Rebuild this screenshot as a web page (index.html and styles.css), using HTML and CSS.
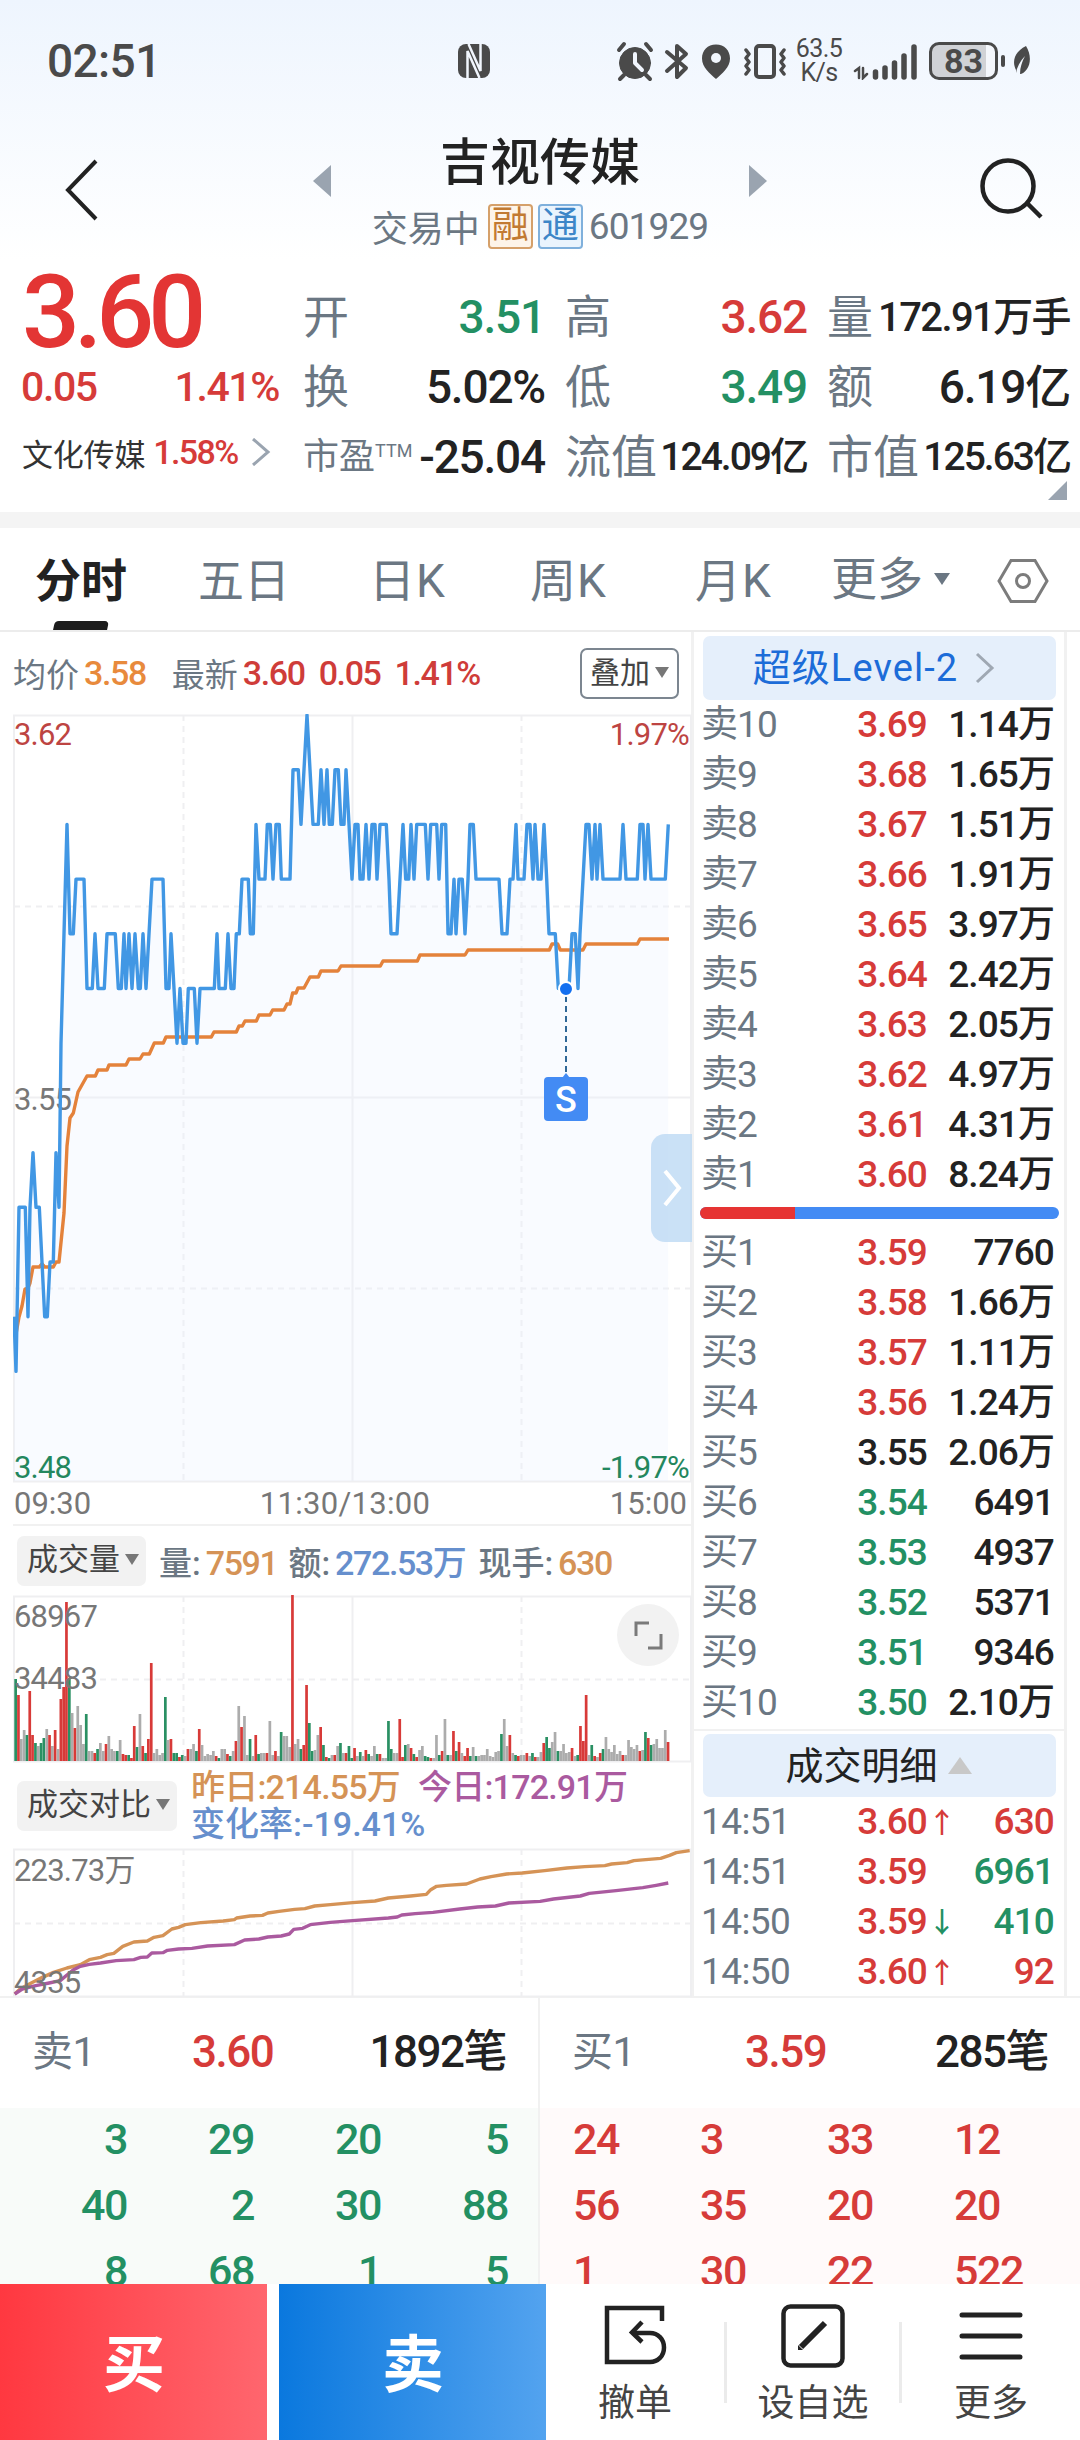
FILE: index.html
```html
<!DOCTYPE html>
<html lang="zh-CN">
<head>
  <meta charset="UTF-8" />
  <meta name="viewport" content="width=device-width, initial-scale=1.0"/>
  <title>吉视传媒 601929</title>
  <link rel="stylesheet" href="styles.css">
</head>
<body>
  <header class="top">
    <div class="status">
      <span class="clock">02:51</span>
      <svg class="nfc" width="34" height="36" viewBox="0 0 34 36">
        <rect x="1" y="1" width="32" height="34" rx="8" fill="#4a4a4a"/>
        <path d="M10.500 35V8l12 27M23.500 1v27L11.500 1" fill="none" stroke="#f1f6fd" stroke-width="2.500"/>
      </svg>
      <svg class="status-icons" width="180" height="44" viewBox="0 0 180 44" fill="#4a4a4a" stroke="#4a4a4a" stroke-linecap="round" stroke-linejoin="round">
        <circle cx="20" cy="24" r="15.5"/>
        <path d="M4 11l5-6M36 11l-5-6M9 36l-4 4M31 36l4 4" stroke-width="4" fill="none"/>
        <path d="M20 15v9l7 7" stroke="#f1f6fd" stroke-width="4" fill="none"/>
        <path d="M52 13l19 16-9 9V7l9 8-19 17" stroke-width="4" fill="none"/>
        <path d="M101 5.500c-8.500 0-14 6-14 14 0 9 8 15 14 20.500 6-5.500 14-11.500 14-20.500 0-8-5.500-14-14-14z" stroke="none"/>
        <circle cx="101" cy="19" r="5" fill="#f1f6fd" stroke="none"/>
        <rect x="141" y="7" width="18" height="31" rx="3" fill="none" stroke-width="4"/>
        <path d="M131 11l3 4-3 4 3 4-3 4 3 4-3 4M169 11l-3 4 3 4-3 4 3 4-3 4 3 4" fill="none" stroke-width="3.500"/>
      </svg>
      <div class="net"><span>63.5</span><span>K/s</span></div>
      <svg class="signal" width="66" height="38" viewBox="0 0 66 38" stroke="#4a4a4a" stroke-width="5.500" stroke-linecap="round" fill="none">
        <path d="M23.500 30v5M33 26v9M42.500 21v14M52 14v21M62 5v30"/>
        <path d="M3 29l4-3v10M11 26v10l4-4" stroke-width="2.500"/>
      </svg>
      <div class="battery"><span>83</span></div>
      <i class="battery-tip"></i>
      <svg class="leaf" width="20" height="32" viewBox="0 0 20 32">
        <path d="M4 25C-1 15 4 6 14 1c5 8 5 17 1 23-2 3-5 5-7 5 0-7 2-12 5-18C8 16 5 22 4 28z" fill="#4a4a4a"/>
      </svg>
    </div>

    <div class="nav">
      <svg class="back" width="34" height="62" viewBox="0 0 34 62"><path d="M31 2L3 31l28 29" fill="none" stroke="#222" stroke-width="4"/></svg>
      <i class="tri tri-left"></i>
      <div class="stock">
        <h1>吉视传媒</h1>
        <div class="stock-sub"><span>交易中</span><b class="tag tag-rong">融</b><b class="tag tag-tong">通</b><span class="code">601929</span></div>
      </div>
      <i class="tri tri-right"></i>
      <svg class="search" width="66" height="66" viewBox="0 0 66 66" fill="none" stroke="#222" stroke-width="4.500"><circle cx="29" cy="29" r="25.500"/><path d="M48 46l14 14"/></svg>
    </div>
  </header>

  <section class="quote">
    <div class="price-box">
      <div class="price">3.60</div>
      <div class="change"><span>0.05</span><span>1.41%</span></div>
      <div class="sector"><span>文化传媒</span><b>1.58%</b>
        <svg width="20" height="28" viewBox="0 0 20 28"><path d="M2 1l15 13L2 27" fill="none" stroke="#9aa4b0" stroke-width="3"/></svg>
      </div>
    </div>
    <div class="stats">
      <div class="stat"><span>开</span><b class="green">3.51</b></div>
      <div class="stat"><span>高</span><b class="red">3.62</b></div>
      <div class="stat"><span>量</span><b class="fit">172.91万手</b></div>
      <div class="stat"><span>换</span><b>5.02%</b></div>
      <div class="stat"><span>低</span><b class="green">3.49</b></div>
      <div class="stat"><span>额</span><b>6.19亿</b></div>
      <div class="stat"><span class="pe">市盈<sup>TTM</sup></span><b>-25.04</b></div>
      <div class="stat"><span>流值</span><b class="fit small">124.09亿</b></div>
      <div class="stat"><span>市值</span><b class="fit small">125.63亿</b></div>
    </div>
    <i class="expand-corner"></i>
  </section>

  <nav class="tabs">
    <span class="tab active">分时</span>
    <span class="tab">五日</span>
    <span class="tab">日K</span>
    <span class="tab">周K</span>
    <span class="tab">月K</span>
    <span class="tab more">更多<i class="caret"></i></span>
    <svg class="hex" width="52" height="46" viewBox="0 0 52 46" fill="none" stroke="#7c7c7c" stroke-width="3"><path d="M14 2.500h24L50 23 38 43.500H14L2 23z"/><circle cx="26" cy="23" r="6.500"/></svg>
  </nav>

  <main class="main">
    <div class="charts">
      <div class="chart-info">
        <span class="lbl">均价</span><b class="orange">3.58</b>
        <span class="lbl latest">最新</span><b>3.60</b><b>0.05</b><b>1.41%</b>
        <span class="overlay-btn">叠加<i class="caret"></i></span>
      </div>

      <div class="price-chart">
        <svg width="680" height="812" viewBox="13 714 680 812">
          <g class="grid">
            <path d="M14 715.500H691V1481.500H14zM14 1097.500H691M352.500 715V1481"/>
            <path class="dash" d="M14 906.500H691M14 1288.500H691M183.500 715V1481M521.500 715V1481"/>
          </g>
          <polygon id="priceArea" class="area"/>
          <text class="t red-t" x="14" y="745">3.62</text>
          <text class="t red-t end" x="689" y="745">1.97%</text>
          <text class="t" x="14" y="1110">3.55</text>
          <text class="t green-t" x="14" y="1478">3.48</text>
          <text class="t green-t end" x="689" y="1478">-1.97%</text>
          <text class="t time" x="14" y="1514">09:30</text>
          <text class="t time mid" x="345" y="1514">11:30/13:00</text>
          <text class="t time end" x="687" y="1514">15:00</text>
          <polyline class="avg-line" transform="scale(.33333 1)" points="42,1317 48,1334 57,1317 66,1306 75,1289 84,1288 90,1283 99,1267 118,1267 126,1264 134,1267 160,1267 168,1262 177,1262 192,1213 201,1146 210,1118 220,1113 234,1092 261,1076 286,1076 294,1070 321,1070 327,1065 378,1065 387,1059 420,1059 429,1054 448,1054 463,1043 490,1043 498,1037 634,1037 642,1032 709,1032 717,1026 727,1026 735,1021 769,1021 777,1015 810,1015 818,1010 852,1010 861,1004 870,1004 878,993 888,993 894,988 912,988 930,977 955,977 963,971 1014,971 1023,966 1141,966 1149,961 1252,961 1260,955 1395,955 1404,950 1648,950 1656,944 1673,944 1681,950 1749,950 1758,944 1912,944 1920,939 2007,939"/>
          <polyline id="priceLine" class="price-line"/>
          <path d="M566 996v76" stroke="#2f6796" stroke-width="2" stroke-dasharray="6 4"/>
          <circle cx="566" cy="989" r="7" fill="#1470f0" stroke="#fff" stroke-width="2"/>
          <path d="M562 1078l4-5 4 5z" fill="#438bf4"/>
          <rect x="544" y="1077" width="44" height="44" rx="4" fill="#438bf4"/>
          <text class="sell-mark" x="566" y="1112">S</text>
        </svg>
        <div class="drawer-handle"><svg width="22" height="40" viewBox="0 0 22 40"><path d="M4 3l14 17L4 37" fill="none" stroke="#fff" stroke-width="4"/></svg></div>
      </div>

      <div class="chart-info vol-info">
        <span class="pick">成交量<i class="caret"></i></span>
        <span class="pair">量:<b class="tan">7591</b></span>
        <span class="pair">额:<b class="blue">272.53万</b></span>
        <span class="pair now">现手:<b class="tan">630</b></span>
      </div>
      <div class="vol-chart">
        <svg width="680" height="168" viewBox="13 1596 680 168">
          <g class="grid">
            <path d="M14 1597.500H691V1762.500H14zM352.500 1597V1762"/>
            <path class="dash" d="M100 1680.500H691M183.500 1597V1762M521.500 1597V1762"/>
          </g>
          <g id="bars"></g>
          <text class="t" x="14" y="1628">68967</text>
          <text class="t" x="14" y="1690">34483</text>
          <circle cx="648" cy="1636" r="31" fill="#f2f2f2"/>
          <path d="M636 1637v-13h13M661 1635v14h-13" fill="none" stroke="#7a7a7a" stroke-width="3"/>
        </svg>
      </div>

      <div class="chart-info cmp-info">
        <span class="pick">成交对比<i class="caret"></i></span>
        <div class="cmp-text">
          <b class="tan">昨日:214.55万</b><b class="purple">今日:172.91万</b><br>
          <b class="blue rate">变化率:-19.41%</b>
        </div>
      </div>
      <svg class="cmp-chart" width="680" height="149" viewBox="13 1849 680 149">
        <g class="grid">
          <path d="M14 1850.500H691V1997.500H14zM352.500 1850V1998"/>
          <path class="dash" d="M14 1924.500H691M183.500 1850V1998M521.500 1850V1998"/>
        </g>
        <g transform="translate(0 1760) scale(.4464 .33333)">
          <polyline class="cmp-line" stroke="#d59356" points="33,705 45,690 70,672 95,655 120,640 150,627 180,617 200,602 225,595 240,587 255,583 275,562 300,549 330,546 345,535 365,530 385,510 400,505 415,497 450,491 500,486 525,482 530,477 560,471 588,469 600,462 625,457 660,451 683,449 705,441 740,437 790,431 840,426 870,417 920,411 955,406 965,392 978,382 1000,379 1045,375 1075,360 1100,353 1135,345 1170,342 1220,335 1270,327 1310,323 1355,320 1370,315 1405,311 1420,305 1480,298 1500,289 1515,281 1545,275"/>
          <polyline class="cmp-line" stroke="#aa5a9f" points="33,705 50,690 80,680 110,672 135,665 150,648 165,632 180,622 200,616 225,612 260,605 300,602 315,595 330,594 340,582 365,581 375,574 400,570 430,568 465,561 525,557 548,543 580,540 600,534 630,531 648,525 658,511 678,508 695,497 740,490 790,485 870,477 890,474 900,468 930,464 970,460 1030,450 1070,444 1110,441 1140,432 1210,427 1240,420 1300,411 1320,403 1380,395 1440,386 1470,379 1497,372"/>
        </g>
        <text class="t" x="14" y="1882">223.73万</text>
        <text class="t" x="14" y="1994">4335</text>
      </svg>
    </div>

    <aside class="book">
      <div class="level2">超级Level-2
        <svg width="20" height="32" viewBox="0 0 20 32"><path d="M2 2l15 14L2 30" fill="none" stroke="#9fa8b3" stroke-width="3"/></svg>
      </div>
      <div class="rows asks" id="asks"></div>
      <div class="ratio"><i></i></div>
      <div class="rows bids" id="bids"></div>
      <div class="deals-head">成交明细<i></i></div>
      <div class="rows deals">
        <div class="row"><span>14:51</span><b class="red">3.60</b><em class="red">↑</em><b class="qty red">630</b></div>
        <div class="row"><span>14:51</span><b class="red">3.59</b><em></em><b class="qty green">6961</b></div>
        <div class="row"><span>14:50</span><b class="red">3.59</b><em class="green">↓</em><b class="qty green">410</b></div>
        <div class="row"><span>14:50</span><b class="red">3.60</b><em class="red">↑</em><b class="qty red">92</b></div>
      </div>
    </aside>
  </main>

  <section class="queue">
    <div class="side sell">
      <div class="side-head"><span>卖1</span><b class="red">3.60</b><b>1892笔</b></div>
      <div class="nums">
        <span>3</span><span>29</span><span>20</span><span>5</span>
        <span>40</span><span>2</span><span>30</span><span>88</span>
        <span>8</span><span>68</span><span>1</span><span>5</span>
      </div>
    </div>
    <div class="side buy">
      <div class="side-head"><span>买1</span><b class="red">3.59</b><b>285笔</b></div>
      <div class="nums">
        <span>24</span><span>3</span><span>33</span><span>12</span>
        <span>56</span><span>35</span><span>20</span><span>20</span>
        <span>1</span><span>30</span><span>22</span><span>522</span>
      </div>
    </div>
  </section>

  <footer class="bar">
    <button class="trade trade-buy">买</button>
    <button class="trade trade-sell">卖</button>
    <div class="action">
      <svg width="64" height="64" viewBox="0 0 64 64" fill="none" stroke="#222" stroke-width="4.500"><path d="M59 17V4H4v54h43c8 0 14-6 14-14.500S55 29 47 29H30"/><path d="M39 18L29 28.500 39 38"/></svg>
      <span>撤单</span>
    </div>
    <div class="action mid">
      <svg width="64" height="64" viewBox="0 0 64 64" fill="none" stroke="#222"><rect x="2.500" y="2.500" width="59" height="59" rx="7" stroke-width="4.500"/><path d="M20 43L44 19" stroke-width="6"/><path d="M17 41v5h5z" fill="#222" stroke="none"/></svg>
      <span>设自选</span>
    </div>
    <div class="action">
      <svg width="64" height="64" viewBox="0 0 64 64" stroke="#222" stroke-width="5" stroke-linecap="round"><path d="M3 11h58M3 32h58M3 53h58"/></svg>
      <span>更多</span>
    </div>
  </footer>

  <script>
    // [x * 3, ticks below 3.62]
    const prices = '42,11 48,12 57,9 76,9 84,11 90,9 99,8 108,9 118,9 134,11 142,11 150,10 160,10 168,8 177,9 183,6 192,4 201,2 210,4 220,4 228,3 252,3 261,5 277,5 285,4 294,5 313,5 321,4 346,4 355,5 364,5 372,4 378,5 387,4 396,5 405,4 415,5 421,5 429,4 438,5 447,4 456,3 489,3 498,5 507,5 513,4 522,5 531,6 540,5 549,6 558,6 565,5 583,5 591,6 600,5 643,5 651,4 657,5 676,5 684,4 693,5 702,5 709,4 718,4 726,3 745,3 751,4 760,4 768,2 777,3 795,3 802,2 811,2 819,3 828,2 838,2 844,3 870,3 879,1 895,1 903,2 912,1 921,0 930,1 939,2 955,2 963,1 972,2 981,1 988,2 997,2 1005,1 1015,1 1023,2 1032,2 1038,1 1047,2 1056,3 1065,2 1074,2 1080,3 1089,3 1098,2 1107,3 1116,2 1125,2 1131,3 1140,2 1159,2 1167,3 1173,4 1191,4 1200,3 1209,2 1217,3 1226,3 1233,2 1242,3 1250,2 1276,2 1284,3 1292,2 1310,2 1317,3 1325,2 1337,2 1344,4 1353,4 1362,3 1368,4 1377,3 1387,3 1395,4 1404,3 1410,2 1420,2 1428,3 1497,3 1506,4 1521,4 1530,3 1539,3 1548,2 1554,3 1572,3 1581,2 1590,2 1599,3 1605,2 1614,3 1623,3 1632,2 1640,3 1647,4 1666,4 1675,5 1707,5 1716,4 1726,4 1734,5 1740,4 1749,3 1758,2 1767,2 1776,3 1785,2 1791,3 1800,2 1809,3 1860,3 1869,2 1878,3 1912,3 1920,2 1929,2 1935,3 1944,2 1953,3 1996,3 2005,2';
    const pts = prices.split(' ').map(p => {
      const [x, k] = p.split(',').map(Number);
      return (x / 3).toFixed(1) + ',' + (715 + k * 54.7).toFixed(1);
    });
    document.getElementById('priceLine').setAttribute('points', pts.join(' '));
    document.getElementById('priceArea').setAttribute('points', '14,1481 ' + pts.join(' ') + ' 668,1481');

    // volume per minute: colour + height
    const volumes = 'g82 r66 n22 n31 g26 r70 r26 g18 n15 g18 g23 n32 r26 n15 r31 n12 r62 r74 r159 g82 n48 r33 n55 n36 n17 g47 n10 n10 r8 g12 n18 n10 r17 n25 n12 n10 g10 n21 r7 r6 g6 r3 r35 g14 n47 r15 g8 r22 r98 n8 n12 n6 n8 g64 n21 r22 g8 g8 r4 g6 n5 r12 n12 n17 g10 r32 n16 n5 n7 n6 n10 r5 g3 n12 n12 r7 g5 n10 r20 n55 r34 n45 n6 g22 n5 r26 g7 n8 n8 r8 n40 n6 r10 n5 g29 n25 n25 n14 r166 n17 n22 g12 r16 r76 g38 g10 n11 n26 r34 g16 r4 g3 n6 r6 n15 g18 n8 r8 g15 g3 r13 n5 g9 n5 r11 g7 n5 n15 g7 r7 n3 n3 g40 g12 n8 n8 r42 r4 g16 n17 r13 g7 r4 n11 n15 g5 g4 r3 n3 n26 g6 r10 n42 g6 n6 r30 g10 r19 n8 r5 r13 g5 n14 g5 n5 n6 n6 n12 n5 n4 n9 n10 g27 n42 n15 r26 n8 g6 r5 n6 n6 r8 n5 g8 r4 n4 n9 r18 g24 g13 n19 n29 g10 n10 n17 n8 n9 r13 n5 g6 r35 r20 r66 n6 g16 r5 n4 r8 g12 n24 n12 n9 n16 n7 n10 r6 n6 n21 n14 n12 n16 r10 n11 g29 r23 g16 n17 n22 n13 n13 n31 r19'.split(' ');
    const colors = { g: '#2a9063', r: '#d83a38', n: '#acacac' };
    const step = (668 - 15.6) / (volumes.length - 1);
    document.getElementById('bars').innerHTML = volumes.map((v, i) => {
      const h = Number(v.slice(1));
      return `<rect x="${(14.3 + i * step).toFixed(1)}" y="${1762 - h}" width="2.7" height="${h}" fill="${colors[v[0]]}"/>`;
    }).join('');

    function fillBook(id, name, rows) {
      document.getElementById(id).innerHTML = rows.map(([n, price, qty]) => {
        const cls = price > 3.55 ? 'red' : price < 3.55 ? 'green' : '';
        return `<div class="row"><span>${name}${n}</span><b class="${cls}">${price}</b><b class="qty">${qty}</b></div>`;
      }).join('');
    }
    fillBook('asks', '卖', [
      [10, '3.69', '1.14万'], [9, '3.68', '1.65万'], [8, '3.67', '1.51万'], [7, '3.66', '1.91万'], [6, '3.65', '3.97万'],
      [5, '3.64', '2.42万'], [4, '3.63', '2.05万'], [3, '3.62', '4.97万'], [2, '3.61', '4.31万'], [1, '3.60', '8.24万']
    ]);
    fillBook('bids', '买', [
      [1, '3.59', '7760'], [2, '3.58', '1.66万'], [3, '3.57', '1.11万'], [4, '3.56', '1.24万'], [5, '3.55', '2.06万'],
      [6, '3.54', '6491'], [7, '3.53', '4937'], [8, '3.52', '5371'], [9, '3.51', '9346'], [10, '3.50', '2.10万']
    ]);
  </script>
</body>
</html>
```
FILE: styles.css
```css
* { box-sizing: border-box; }
body { margin: 0; width: 1080px; height: 2440px; overflow: hidden; background: #fff; color: #222; font-family: Roboto, "Noto Sans CJK SC", sans-serif; display: flex; flex-direction: column; }
b { font-weight: 500; }
i, em { font-style: normal; }
svg { display: block; flex: none; }
.red { color: #d63b39; }
.green { color: #239063; }
.orange { color: #e88a3c; }
.tan { color: #d59356; }
.blue { color: #668fcd; }
.purple { color: #aa5a9f; }
.caret { display: inline-block; border: 7px solid transparent; border-top: 11px solid #777; border-bottom: 0; }

/* status bar and title */
.top { height: 260px; flex: none; background: linear-gradient(#eef5fe, #fff); }
.status { height: 122px; padding: 0 45px 0 47px; display: flex; align-items: center; color: #4a4a4a; }
.clock { width: 410px; font-size: 46px; font-weight: 500; letter-spacing: -.6px; }
.nfc { margin-right: 124px; }
.status-icons { margin: -1px -3px 0 0; }
.net { width: 54px; flex: none; display: flex; flex-direction: column; align-items: center; font-size: 25px; line-height: 24px; letter-spacing: -.6px; }
.signal { margin: 0 11px 0 6px; }
.battery { flex: none; width: 69px; height: 38px; border: 3px solid #4a4a4a; border-radius: 10px; background: linear-gradient(90deg, #d0d2d6 86%, #f4f7fc 86%); text-align: center; font-size: 34px; line-height: 33px; font-weight: 700; }
.battery-tip { flex: none; width: 4px; height: 12px; margin: 0 7px 0 3px; border-radius: 2px; background: #4a4a4a; }
.nav { height: 138px; display: flex; align-items: flex-start; padding: 0 35px 0 65px; }
.back { margin-top: 37px; }
.tri { border: 16px solid transparent; margin-top: 43px; }
.tri-left { margin-left: 214px; border-right: 18px solid #9aa4b0; border-left: 0; }
.tri-right { border-left: 18px solid #9aa4b0; border-right: 0; }
.stock { width: 418px; text-align: center; }
.stock h1 { margin: 0; padding-top: 8px; font-size: 50px; line-height: 66px; font-weight: 500; }
.stock-sub { display: flex; justify-content: center; align-items: center; height: 60px; font-size: 36px; color: #6b7783; }
.tag { width: 45px; height: 45px; margin-left: 5px; border: 2px solid; border-radius: 4px; font-size: 37px; line-height: 40px; text-align: center; font-weight: 400; }
.tag-rong { margin-left: 8px; color: #c27a32; border-color: #d5a06a; background: #fdf4e9; }
.tag-tong { color: #3d86c8; border-color: #7fb0dc; background: #eaf4fd; }
.code { margin-left: 6px; font-size: 37px; letter-spacing: -.9px; }
.search { margin: 35px 0 0 auto; }

/* quote */
.quote { position: relative; height: 252px; flex: none; display: flex; padding-left: 22px; }
.price-box { width: 281px; color: #d63b39; }
.price { height: 92px; padding-top: 2px; font-size: 102px; line-height: 100px; font-weight: 500; letter-spacing: -6px; color: #e33534; }
.change { height: 70px; width: 258px; display: flex; justify-content: space-between; font-size: 41px; line-height: 71px; font-weight: 500; letter-spacing: -1.4px; margin-left: -1px; }
.sector { display: flex; align-items: center; height: 60px; font-size: 31px; color: #333; letter-spacing: -.2px; }
.sector b { margin: 0 13px 0 8px; color: #d63b39; font-size: 34px; letter-spacing: -1.6px; }
.stats { display: grid; grid-template-columns: 242px 242px 243px; grid-auto-rows: 70px; gap: 0 20px; padding-top: 22px; }
.stat { display: flex; justify-content: space-between; line-height: 71px; font-size: 46px; white-space: nowrap; }
.stat span { color: #6b7783; }
.stat b { letter-spacing: -1.2px; }
.stat .fit { font-size: 40px; letter-spacing: -1.6px; }
.stat .fit.small { font-size: 39px; letter-spacing: -2px; }
.stat .pe { font-size: 36px; }
.pe sup { font-size: 18px; line-height: 0; vertical-align: 12px; }
.expand-corner { position: absolute; right: 13px; bottom: 12px; border-bottom: 19px solid #9aa4b0; border-left: 19px solid transparent; }

/* period tabs */
.tabs { height: 120px; border-top: 16px solid #f4f4f4; border-bottom: 2px solid #ececec; padding: 0 31px 0 35px; display: flex; color: #6b7783; font-size: 46px; line-height: 107px; flex: none; }
.tab { width: 163px; white-space: nowrap; position: relative; }
.tab:nth-child(2) { width: 171px; }
.tab:nth-child(3) { width: 161px; }
.tab:nth-child(4) { width: 165px; }
.tab:nth-child(5) { width: 136px; }
.tab:nth-child(3), .tab:nth-child(4), .tab:nth-child(5) { letter-spacing: 1px; }
.tab.active { color: #222; font-weight: 700; }
.tab.active::after { content: ""; position: absolute; left: 19px; bottom: 0; width: 54px; height: 9px; background: #1c1c1c; border-radius: 4px 4px 0 0; transform: skewX(-12deg); }
.tab.more { width: 140px; display: flex; align-items: center; }
.more .caret { border-width: 12px 8px 0; border-top-color: #6b7783; margin-left: 11px; }
.hex { margin: 30px 0 0 auto; }

/* charts */
.main { height: 1366px; flex: none; display: flex; border-bottom: 2px solid #f1f1f1; }
.charts { width: 694px; padding-left: 13px; border-right: 3px solid #f1f1f1; flex: none; }
.chart-info { display: flex; align-items: center; height: 82px; font-size: 33px; color: #6b7783; white-space: nowrap; }
.chart-info b { letter-spacing: -1.4px; }
.chart-info > b { margin-left: 5px; color: #cf3c39; font-size: 34px; }
.chart-info > b.orange { color: #e88a3c; }
.chart-info > b + b { margin-left: 14px; }
.latest { margin-left: 26px; }
.overlay-btn { width: 99px; height: 51px; margin: 1px 12px 0 auto; border: 2px solid #7c8690; border-radius: 7px; font-size: 30px; line-height: 46px; text-align: center; color: #444; }
.overlay-btn .caret, .pick .caret { margin: 0 0 5px 5px; }
.price-chart { position: relative; height: 812px; border-bottom: 2px solid #f1f1f1; }
.drawer-handle { position: absolute; right: -1px; top: 420px; width: 41px; height: 108px; border-radius: 14px 0 0 14px; background: rgba(187, 216, 244, .78); display: flex; align-items: center; padding-left: 10px; }
.grid { fill: none; stroke: #efeff1; stroke-width: 2; }
.dash { stroke-dasharray: 6 5; }
.area { fill: rgba(234, 243, 254, .3); }
.avg-line { fill: none; stroke: #e4823b; stroke-width: 3.4; vector-effect: non-scaling-stroke; stroke-linejoin: round; }
.price-line { fill: none; stroke: #4197e4; stroke-width: 3.4; stroke-linejoin: round; }
.cmp-line { fill: none; stroke-width: 3.4; vector-effect: non-scaling-stroke; stroke-linejoin: round; }
.t { font-size: 31px; fill: #777; letter-spacing: -.8px; }
.time { letter-spacing: 0; }
.red-t { fill: #bd4442; }
.green-t { fill: #23875e; }
.end { text-anchor: end; }
.mid { text-anchor: middle; }
.time.mid { letter-spacing: .3px; }
.sell-mark { font-size: 36px; font-weight: 500; fill: #fff; text-anchor: middle; }
.vol-info { height: 69px; }
.pick { height: 50px; margin-left: 4px; padding: 0 7px 0 10px; border-radius: 7px; background: #f2f2f2; font-size: 31px; line-height: 48px; color: #444; }
.pair { margin-left: 13px; font-weight: 500; }
.pair b { margin-left: 5px; font-size: 34px; }
.pair + .pair { margin-left: 11px; }
.pair.now { margin-left: 13px; }
.vol-chart { height: 168px; }
.cmp-info { height: 85px; }
.cmp-text { margin-left: 14px; font-size: 34px; line-height: 37px; }
.chart-info .cmp-text b { letter-spacing: -.8px; }
.chart-info .cmp-text .rate { letter-spacing: 0; }
.cmp-text .purple { margin-left: 18px; }

/* order book */
.book { width: 373px; border-right: 3px solid #f1f1f1; padding: 4px 8px 0 9px; flex: none; }
.level2 { height: 64px; margin-right: 0; border-radius: 7px; background: #e5effb; color: #1c6cd8; font-size: 38px; line-height: 66px; letter-spacing: 1.1px; display: flex; justify-content: center; align-items: center; gap: 17px; padding-right: 11px; font-weight: 400; }
.rows { padding-right: 2px; }
.row { display: flex; height: 50px; line-height: 50px; font-size: 37px; letter-spacing: -.9px; }
.row span { width: 143px; color: #6b7783; flex: none; margin-left: -2px; }
.row b { width: 83px; text-align: right; white-space: nowrap; flex: none; }
.row em { width: 26px; padding-left: 1px; font-family: "Noto Sans CJK SC"; font-size: 28px; font-weight: 500; line-height: 48px; }
.row .qty { margin-left: auto; width: 124px; }
.deals .row .qty { width: 99px; }
.ratio { height: 12px; margin: 7px -3px 9px -3px; border-radius: 6px; background: #438bf4; overflow: hidden; }
.ratio i { display: block; width: 95px; height: 12px; background: #e63433; }
.bids { height: 501px; }
.deals-head { position: relative; height: 63px; margin: 5px 0 0 0; border-radius: 7px; background: #e5effb; font-size: 38px; line-height: 60px; display: flex; justify-content: center; align-items: center; gap: 10px; padding-right: 2px; }
.deals-head::before { content: ""; position: absolute; top: -5px; left: -9px; right: -8px; height: 2px; background: #f1f1f1; }
.deals-head i { border: 12px solid transparent; border-bottom: 17px solid #c8c8c8; border-top: 0; }
.deals span { letter-spacing: -.6px; }

/* queue at best prices */
.queue { height: 286px; display: flex; flex: none; overflow: hidden; }
.side { width: 540px; }
.side.sell { border-right: 2px solid #f1f1f1; }
.side-head { height: 110px; padding: 0 32px 0 32px; display: flex; line-height: 108px; font-size: 44px; }
.side-head span { width: 160px; color: #6b7783; font-size: 41px; letter-spacing: -.5px; }
.side-head b { letter-spacing: -1.5px; }
.side-head b:last-child { margin-left: auto; }
.side.buy .side-head span { width: 173px; }
.nums { display: grid; grid-template-columns: repeat(4, 127px); grid-auto-rows: 66px; height: 180px; font-size: 43px; line-height: 62px; font-weight: 500; letter-spacing: -1.5px; }
.sell .nums { background: #f8fbf9; color: #239063; text-align: right; }
.buy .nums { background: #fffafa; color: #d63b39; padding-left: 33px; }

/* bottom actions */
.bar { height: 156px; flex: none; display: flex; background: #fff; }
.trade { width: 267px; border: 0; padding: 0 0 4px 1px; margin-right: 12px; color: #fff; font-family: inherit; font-size: 62px; font-weight: 700; }
.trade-buy { background: linear-gradient(90deg, #ff3840, #ff666e); }
.trade-sell { margin-right: 0; background: linear-gradient(90deg, #0a78de, #53a3ef); }
.action { width: 178px; padding-top: 20px; display: flex; flex-direction: column; align-items: center; font-size: 37px; line-height: 44px; color: #444; }
.action span { margin-top: 14px; }
.action.mid { background: linear-gradient(#ebebeb, #ebebeb) left 38px / 3px 81px no-repeat, linear-gradient(#ebebeb, #ebebeb) right 38px / 3px 81px no-repeat; }
```
